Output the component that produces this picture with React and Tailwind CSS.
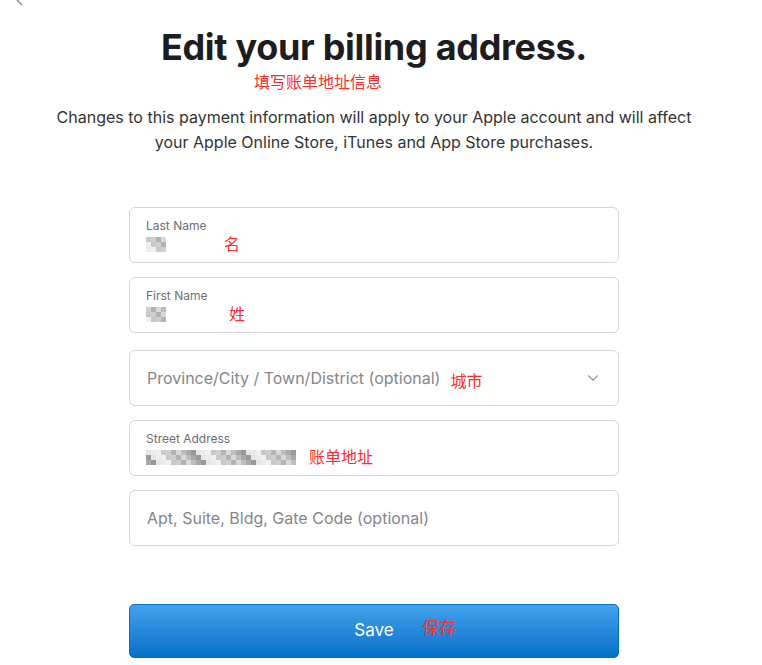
import { ChevronDown } from 'lucide-react'

const sans = { fontFamily: 'Inter, "Noto Sans CJK SC", sans-serif' }

function Blur({ rows }) {
  return (
    <div className="flex flex-col">
      {rows.map((row, i) => (
        <div key={i} className="flex">
          {row.map((c, j) => (
            <div key={j} className="w-[5px] h-[5px]" style={{ background: c }} />
          ))}
        </div>
      ))}
    </div>
  )
}

const g = ['#d9d9d9', '#c8c8c8', '#e6e6e6', '#bdbdbd', '#cfcfcf', '#ececec', '#a9a9a9', '#b3b3b3', '#f0f0f0', '#999999']
const mk = (w, h, seed) =>
  Array.from({ length: h }, (_, r) => Array.from({ length: w }, (_, c) => g[(r * 7 + c * 3 + seed) % g.length]))

function Field({ label, value, note, noteClass }) {
  return (
    <div className="h-[56px] rounded-[6px] border border-[#d6d6d6] bg-white px-[16px] pt-[11px]">
      <div className="text-[12px] leading-[14px] text-[#6e6e73]">{label}</div>
      <div className="flex items-center mt-[2px] h-[18px]">
        {value}
        <span className={`text-[16px] text-[#ff2d2d] ${noteClass}`}>{note}</span>
      </div>
    </div>
  )
}

function Placeholder({ text, note, noteClass, chevron }) {
  return (
    <div className="h-[56px] rounded-[6px] border border-[#d6d6d6] bg-white pl-[17px] pr-[16px] flex items-center">
      <span className="text-[16px] text-[#86868b]">{text}</span>
      {note && <span className={`text-[16px] text-[#ff2d2d] ${noteClass}`}>{note}</span>}
      {chevron && <ChevronDown className="ml-auto text-[#6e6e73]" size={18} strokeWidth={1.4} />}
    </div>
  )
}

export default function App() {
  return (
    <div className="w-[748px] bg-white text-[#1d1d1f] relative" style={sans}>
      <svg className="absolute left-[16px] top-0" width="8" height="8" viewBox="0 0 8 8">
        <path d="M1 0 L6 5" stroke="#8a8a8a" strokeWidth="1.5" />
      </svg>
      <div className="flex flex-col items-center pt-[26px]">
        <h1 className="text-[36px] leading-[43px] font-bold tracking-[-0.3px]">Edit your billing address.</h1>
        <div className="self-start ml-[254px] text-[16px] leading-[20px] text-[#ff2d2d] mt-[3px]">填写账单地址信息</div>
        <p className="mt-[13px] text-[16px] leading-[25px] text-[#333] text-center w-[660px]">
          Changes to this payment information will apply to your Apple account and will affect your Apple Online Store, iTunes and App Store purchases.
        </p>
      </div>

      <div className="mx-auto w-[490px] mt-[52px] flex flex-col gap-[14px]">
        <Field
          label="Last Name"
          value={<Blur rows={mk(4, 3, 1)} />}
          note="名"
          noteClass="ml-[58px]"
        />
        <Field
          label="First Name"
          value={<Blur rows={mk(4, 3, 4)} />}
          note="姓"
          noteClass="ml-[63px]"
        />
        <div className="mt-[3px]">
          <Placeholder
            text="Province/City / Town/District (optional)"
            note="城市"
            noteClass="ml-[10px] mt-[6px]"
            chevron
          />
        </div>
        <Field
          label="Street Address"
          value={<Blur rows={mk(30, 3, 2)} />}
          note="账单地址"
          noteClass="ml-[13px]"
        />
        <Placeholder text="Apt, Suite, Bldg, Gate Code (optional)" />

        <button className="relative mt-[44px] h-[54px] rounded-[5px] border border-[#0070c9] bg-gradient-to-b from-[#42a1ec] to-[#0070c9] text-white text-[17px] flex items-center justify-center">
          <span>Save</span>
          <span className="absolute left-[292px] top-[11px] text-[#ff2d2d]">保存</span>
        </button>
      </div>
    </div>
  )
}
